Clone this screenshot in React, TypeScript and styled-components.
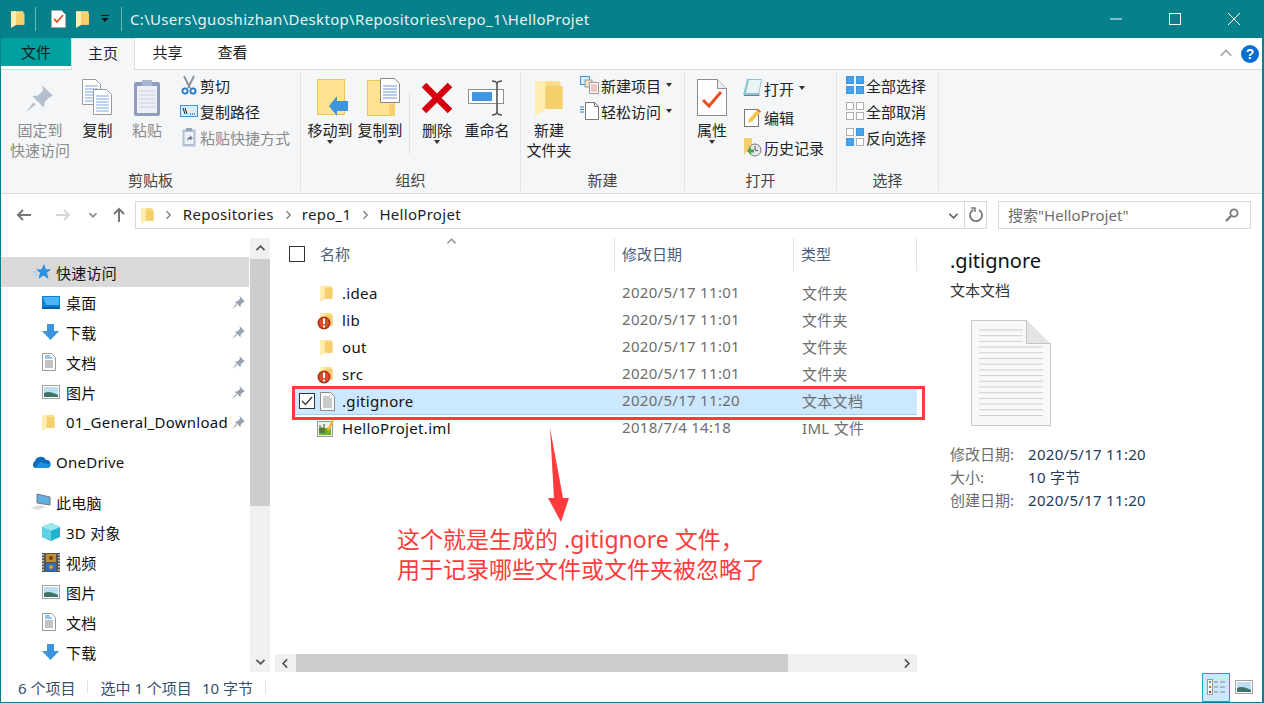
import * as React from "react";
import styled, { createGlobalStyle } from "styled-components";

const FONT = `"Noto Sans", "Noto Sans CJK SC", sans-serif`;

const Global = createGlobalStyle`
  html, body { margin: 0; padding: 0; height: 100%; overflow: hidden; background: #fff; }
  body { font-family: ${FONT}; font-size: 15px; color: #1a1a1a; }
  svg { display: block; flex: none; }
`;

/* ---------- icons ---------- */
const Folder = ({ size = 17 }: { size?: number }) => (
  <svg width={size * 0.75} height={size} viewBox="2 0 12 16">
    <path d="M3 1h10v12H6.500L3 15z" fill="#f9dc8a" />
    <path d="M2 1h4.500v12L2 16z" fill="#ffeeb0" />
    <path d="M6.500 3H14v10H6.500z" fill="#f5cf6b" />
  </svg>
);
const Pin = ({ color = "#9aa3ad", size = 15 }: { color?: string; size?: number }) => (
  <svg width={size} height={size} viewBox="0 0 14 14">
    <path d="M8 1l5 5-1.500.6-2.300 2.300-.4 2.600-5.300-5.300 2.600-.4 2.300-2.300z" fill={color} />
    <path d="M1 13l3.500-4.500 1 1z" fill={color} />
  </svg>
);
const Caret = styled.i`
  display: block;
  width: 0;
  height: 0;
  border: 3.5px solid transparent;
  border-top: 4px solid #333;
  border-bottom: 0;
`;
const Doc = () => (
  <svg width="30" height="37" viewBox="0 0 30 37">
    <path d="M.5.500h20l9 9v27H.500z" fill="#fff" stroke="#8b8b8b" />
    <path d="M20.500.500v9h9" fill="#eee" stroke="#8b8b8b" />
    <path d="M6 21l6 6 12-14" fill="none" stroke="#e8501f" strokeWidth="3" />
  </svg>
);
const TitleNote = () => (
  <svg width="15" height="18" viewBox="0 0 15 18">
    <path d="M.5.500h10l4 4v13H.500z" fill="#fff" stroke="#aaa" />
    <path d="M3 9l3 3 6-7" fill="none" stroke="#e8501f" strokeWidth="1.800" />
  </svg>
);
const PinLarge = () => (
  <svg width="30" height="30" viewBox="0 0 14 14">
    <path d="M8 1l5 5-1.500.6-2.300 2.300-.4 2.600-5.300-5.300 2.600-.4 2.300-2.300z" fill="#b4bfce" />
    <path d="M.5 13.500l3.500-4.500 1 1z" fill="#b4bfce" />
  </svg>
);
const Paper = ({ x, y }: { x: number; y: number }) => (
  <g transform={`translate(${x} ${y})`}>
    <path d="M.5.500h13l5 5v20H.500z" fill="#fff" stroke="#999" />
    <path d="M3 7h13M3 10h13M3 13h13M3 16h13M3 19h13M3 22h13" stroke="#7aa7e0" />
  </g>
);
const CopyIcon = () => (
  <svg width="31" height="37" viewBox="0 0 31 37">
    <Paper x={0} y={0} />
    <Paper x={11} y={10} />
  </svg>
);
const PasteIcon = () => (
  <svg width="28" height="38" viewBox="0 0 28 38">
    <rect x="1" y="3" width="26" height="34" rx="2" fill="#8e9dbb" />
    <rect x="4" y="7" width="20" height="27" fill="#eceff5" />
    <path d="M6 12h16M6 16h16M6 20h16M6 24h16M6 28h16" stroke="#c7cfde" />
    <rect x="9" y="1" width="10" height="6" rx="1" fill="#a9b5cb" />
  </svg>
);
const Scissors = () => (
  <svg width="16" height="20" viewBox="0 0 16 20">
    <path d="M3 1l6 12M13 1L7 13" stroke="#8a8f99" strokeWidth="1.800" fill="none" />
    <circle cx="4" cy="16" r="2.600" fill="none" stroke="#1f79c5" strokeWidth="1.800" />
    <circle cx="12" cy="16" r="2.600" fill="none" stroke="#1f79c5" strokeWidth="1.800" />
  </svg>
);
const PathIcon = () => (
  <svg width="18" height="12" viewBox="0 0 18 12">
    <rect x=".5" y=".5" width="17" height="11" fill="#d8ecfb" stroke="#3d94d6" />
    <path d="M3 3l2 6M5 3l2 6" stroke="#223" />
    <path d="M10 9h1M12 9h1M14 9h1" stroke="#223" />
  </svg>
);
const ShortcutIcon = () => (
  <svg width="14" height="20" viewBox="0 0 14 20">
    <rect x=".5" y="2.500" width="13" height="17" rx="1" fill="#b4bfd2" />
    <rect x="2.500" y="5" width="9" height="12" fill="#eef1f6" />
    <rect x="4" y="1" width="6" height="3" fill="#96a3ba" />
    <path d="M5 14c0-3 1.500-4 3-4V8.500L11 11 8 13.500V12c-1 0-2 .5-3 2z" fill="#6f7f99" />
  </svg>
);
const MoveTo = () => (
  <svg width="36" height="38" viewBox="-5 0 36 38">
    <rect x=".5" y=".5" width="27" height="35" fill="#ffe391" stroke="#e9c65c" />
    <path d="M12 27l8-10v5h11v10H20v5z" fill="#3d94de" />
  </svg>
);
const CopyTo = () => (
  <svg width="40" height="40" viewBox="-7 -2 40 40">
    <path d="M.5.500h27v35H.500z" fill="#ffe391" stroke="#e9c65c" />
    <path d="M22 24h6v12h-6z" fill="#f7cf6b" />
    <path d="M13.500-1.500h14l5 5v19h-19z" fill="#fff" stroke="#888" />
    <path d="M16 6h14M16 9h14M16 12h14M16 15h14M16 18h14" stroke="#6f98d8" />
  </svg>
);
const DeleteIcon = () => (
  <svg width="32" height="32" viewBox="0 0 32 32">
    <path d="M3 3l26 26M29 3L3 29" stroke="#d5000f" strokeWidth="6.500" />
  </svg>
);
const RenameIcon = () => (
  <svg width="38" height="36" viewBox="0 0 38 36">
    <rect x=".5" y="9.500" width="35" height="14" fill="#fff" stroke="#8f8f8f" />
    <rect x="4" y="12" width="20" height="9" fill="#3f97e3" />
    <path d="M24 1c3 0 4.500 1 5 2.500C29.500 2 31 1 34 1M29 3v30M24 35c3 0 4.500-1 5-2.500.5 1.500 2 2.500 5 2.500" fill="none" stroke="#555" strokeWidth="1.600" />
  </svg>
);
const NewItem = () => (
  <svg width="20" height="18" viewBox="0 0 20 18">
    <rect x=".5" y=".5" width="9" height="8" fill="#d8ecfb" stroke="#3d94d6" />
    <rect x="5" y="4" width="7" height="7" fill="#f1e3c2" stroke="#999" />
    <path d="M9.500 6.500h9v11h-9z" fill="#fff" stroke="#999" />
    <path d="M11 9h6M11 11h6M11 13h6M11 15h6" stroke="#e08a8a" />
  </svg>
);
const EasyAccess = () => (
  <svg width="20" height="18" viewBox="0 0 20 18">
    <path d="M5.500.500h9l4 4v13h-13z" fill="#fff" stroke="#777" />
    <path d="M14.500.500v4h4" fill="none" stroke="#777" />
    <path d="M0 5h4M0 7.500h4M0 10h4" stroke="#2a7fd1" />
  </svg>
);
const OpenIcon = () => (
  <svg width="20" height="20" viewBox="0 0 20 20">
    <path d="M4 1h15l-3 16H0z" fill="#8fc0cf" />
    <path d="M6 2h12l-2.500 13H3z" fill="#e8f3f4" />
    <path d="M1 17h14l2-1-1 2H1z" fill="#657f8c" />
  </svg>
);
const EditIcon = () => (
  <svg width="18" height="20" viewBox="0 0 18 20">
    <rect x=".5" y="1.500" width="14" height="17" fill="#fff" stroke="#777" />
    <path d="M4 15l1-4L14 1l3 2.500-9 10z" fill="#f6c64c" />
    <path d="M14 1l3 2.500-1 1.200-3-2.500z" fill="#e9603a" />
  </svg>
);
const HistoryIcon = () => (
  <svg width="20" height="20" viewBox="0 0 20 20">
    <path d="M1 1h8v14H3l-2 3z" fill="#f5cf6b" />
    <circle cx="12" cy="13" r="6" fill="#e4e8ea" stroke="#777" />
    <path d="M12 9v4l3 1" fill="none" stroke="#555" />
    <path d="M4 14l4-4v2.500h3v3H8V18z" fill="#44a544" />
  </svg>
);
const Grid = ({ fills }: { fills: string[] }) => (
  <svg width="18" height="18" viewBox="0 0 18 18">
    {[
      [0, 0],
      [10, 0],
      [0, 10],
      [10, 10],
    ].map(([x, y], i) => (
      <rect
        key={i}
        x={x + 0.5}
        y={y + 0.5}
        width="7"
        height="7"
        fill={fills[i]}
        stroke={fills[i] === "#fff" ? "#b0b0b0" : "#3d97e0"}
      />
    ))}
  </svg>
);
const Arrow = ({ d, color, size = 16 }: { d: string; color: string; size?: number }) => (
  <svg width={size} height={size} viewBox="0 0 16 16">
    <path d={d} fill="none" stroke={color} strokeWidth="2" />
  </svg>
);
const Warn = () => (
  <svg width="14" height="14" viewBox="0 0 14 14">
    <circle cx="7" cy="7" r="6.500" fill="#a93015" />
    <circle cx="7" cy="7" r="5" fill="#d9502c" />
    <path d="M6 2.500h2V8H6zM6 9.500h2v2H6z" fill="#fff" />
  </svg>
);
const SmallDoc = () => (
  <svg width="15" height="19" viewBox="0 0 15 19">
    <path d="M.5.500h10l4 4v14H.500z" fill="#fafafa" stroke="#8c8c8c" />
    <path d="M3 5h7M3 7h9M3 9h9M3 11h9M3 13h9M3 15h9" stroke="#9a9a9a" />
  </svg>
);
const ImlIcon = () => (
  <svg width="18" height="18" viewBox="0 0 18 18">
    <rect x=".5" y="2.500" width="15" height="15" fill="#eef3e0" stroke="#999" />
    <rect x="2" y="9" width="12" height="7" fill="#6eb32e" />
    <path d="M3 14V6M5 14V8M7 14V5" stroke="#444" />
    <path d="M10 11L15 1l2 1-5 10z" fill="#f2b632" />
  </svg>
);
const Desktop = () => (
  <svg width="18" height="13" viewBox="0 0 18 13">
    <rect width="18" height="13" fill="#0a7fd4" />
    <path d="M1 1h16v8H4z" fill="#4db5f5" />
    <rect y="11" width="18" height="2" fill="#075fa6" />
  </svg>
);
const Download = () => (
  <svg width="17" height="16" viewBox="0 0 17 16">
    <path d="M5 0h7v7h5l-8.500 9L0 7h5z" fill="#3d94de" />
  </svg>
);
const DocsIcon = () => (
  <svg width="14" height="18" viewBox="0 0 14 18">
    <path d="M.5.500h9l4 4v13H.500z" fill="#fff" stroke="#999" />
    <path d="M3 3h5M3 5h7" stroke="#2a8bdc" />
    <path d="M3 8h8M3 10h8M3 12h8M3 14h8" stroke="#888" />
  </svg>
);
const Pictures = () => (
  <svg width="18" height="14" viewBox="0 0 18 14">
    <rect x=".5" y=".5" width="17" height="13" fill="#fff" stroke="#a3a3a3" />
    <rect x="2" y="2" width="14" height="10" fill="#bcdff5" />
    <path d="M2 8c4-2 8-1 14 2v2H2z" fill="#3f7568" />
  </svg>
);
const StarIcon = () => (
  <svg width="18" height="16" viewBox="0 0 18 16">
    <path d="M11 0l2 5.300h5l-4 3.400 1.500 6.300-5-3.600L5.500 15 7 8.700 3 5.300h5.500z" fill="#2d8fe0" />
    <path d="M0 8h4M1 11h3M3 5h3" stroke="#8cc4f0" />
  </svg>
);
const Cloud = () => (
  <svg width="20" height="14" viewBox="0 0 20 14">
    <path d="M4 13a4 4 0 0 1 0-7 6 6 0 0 1 11-1 4 4 0 0 1 1 8z" fill="#0f6cbd" />
    <path d="M4 13h12a3.500 3.500 0 0 0 3.500-3.500L9 7z" fill="#1b8fe0" />
  </svg>
);
const PcIcon = () => (
  <svg width="20" height="18" viewBox="0 0 20 18">
    <path d="M6 1l13 3v8L6 10z" fill="#5eb0e5" stroke="#777" />
    <path d="M0 15l9-3 6 2-8 3z" fill="#d9dde0" />
  </svg>
);
const Cube = () => (
  <svg width="18" height="18" viewBox="0 0 18 18">
    <path d="M9 0l9 4v10l-9 4-9-4V4z" fill="#1fb5cf" />
    <path d="M9 0l9 4-9 4-9-4z" fill="#9fe8f0" />
    <path d="M0 4l9 4v10l-9-4z" fill="#5ed3e3" />
  </svg>
);
const Film = () => (
  <svg width="18" height="19" viewBox="0 0 18 19">
    <rect width="18" height="19" fill="#555" />
    <path d="M1 1v17M17 1v17" stroke="#ddd" strokeDasharray="1.500 1.500" strokeWidth="1.500" />
    <rect x="4" y="1" width="10" height="8" fill="#c48d2a" />
    <rect x="4" y="10" width="10" height="8" fill="#2a6fc4" />
    <circle cx="9" cy="5" r="2" fill="#7a3a1a" />
    <circle cx="9" cy="14" r="2" fill="#d8a020" />
  </svg>
);
const BigDoc = () => (
  <svg width="80" height="106" viewBox="0 0 80 106">
    <path d="M.5.500h55l24 24v81H.500z" fill="#f7f8f8" stroke="#c8c8c8" />
    <path d="M55.500.500v23h24" fill="#e4e4e4" stroke="#c4c4c4" />
    {Array.from({ length: 16 }, (_, i) => (
      <path key={i} d={`M8 ${10 + i * 5.700}h${i < 3 ? 44 : 64}`} stroke="#cfcfcf" />
    ))}
  </svg>
);
const ViewList = () => (
  <svg width="18" height="16" viewBox="0 0 18 16">
    <rect x=".5" y=".5" width="5" height="15" fill="#fff" stroke="#999" />
    <rect x="2" y="2" width="2" height="2" fill="#39c" />
    <rect x="2" y="7" width="2" height="2" fill="#b70" />
    <rect x="2" y="12" width="2" height="2" fill="#c22" />
    <path d="M7 3h4M13 3h5M7 8h4M13 8h5M7 13h4M13 13h5" stroke="#888" />
  </svg>
);

/* ---------- window shell ---------- */
const Win = styled.div`
  width: 1264px;
  height: 703px;
  box-sizing: border-box;
  border: 1px solid #06808a;
  border-top: 0;
  border-right-width: 2px;
  display: flex;
  flex-direction: column;
  position: relative;
  background: #fff;
  overflow: hidden;
`;
const TitleBar = styled.div`
  height: 38px;
  margin: 0 -2px 0 -1px;
  padding: 0 1px 0 11px;
  background: #06808a;
  display: flex;
  align-items: center;
  flex: none;
  color: #fff;
`;
const TitleSep = styled.span<{ $m: string }>`
  width: 1px;
  height: 24px;
  background: #6fb3b9;
  margin: ${(p) => p.$m};
`;
const TitleGap = styled.span<{ $w: number }>`
  width: ${(p) => p.$w}px;
`;
const TitleText = styled.span`
  font-size: 15px;
  letter-spacing: 0.32px;
  color: #e6f3f4;
  flex: 1;
  white-space: nowrap;
`;
const WinBtn = styled.span`
  width: 59px;
  display: flex;
  justify-content: center;
`;
const TabBar = styled.div`
  height: 32px;
  flex: none;
  display: flex;
  align-items: flex-start;
  border-bottom: 1px solid #dadbdc;
  box-sizing: border-box;
  position: relative;
`;
const Tab = styled.div<{ $w: number; $kind?: string }>`
  width: ${(p) => p.$w}px;
  box-sizing: border-box;
  text-align: center;
  font-size: 15px;
  line-height: 28px;
  height: ${(p) => (p.$kind === "file" ? 28 : p.$kind === "on" ? 32 : 31)}px;
  background: ${(p) => (p.$kind === "file" ? "#00a0a0" : p.$kind === "on" ? "#f5f6f7" : "#fff")};
  color: ${(p) => (p.$kind === "file" ? "#06201f" : "#222")};
  border: ${(p) => (p.$kind === "on" ? "1px solid #dadbdc" : "0")};
  border-bottom: 0;
`;
const TabEnd = styled.div`
  margin-left: auto;
  display: flex;
  align-items: center;
  gap: 8px;
  height: 31px;
  padding-right: 3px;
`;
const Help = styled.span`
  width: 18px;
  height: 18px;
  border-radius: 50%;
  background: #0a6fd0;
  color: #fff;
  font: bold 14px/18px "Liberation Sans", sans-serif;
  text-align: center;
`;

/* ---------- ribbon ---------- */
const Ribbon = styled.div`
  height: 124px;
  flex: none;
  box-sizing: border-box;
  background: #f5f6f7;
  border-bottom: 1px solid #dadbdc;
  display: flex;
  align-items: stretch;
`;
const Group = styled.div<{ $w: number }>`
  width: ${(p) => p.$w}px;
  flex: none;
  box-sizing: border-box;
  margin: 2px 0;
  border-right: 1px solid #e1e3e6;
  display: flex;
  flex-direction: column;
`;
const GroupBody = styled.div<{ $pl?: number }>`
  flex: 1;
  display: flex;
  padding-left: ${(p) => p.$pl ?? 0}px;
`;
const GroupLabel = styled.div`
  text-align: center;
  font-size: 15px;
  line-height: 20px;
  height: 21px;
  color: #444;
`;
const LargeBtn = styled.div<{ $w: number; $off?: boolean }>`
  width: ${(p) => p.$w}px;
  flex: none;
  display: flex;
  flex-direction: column;
  align-items: center;
  color: ${(p) => (p.$off ? "#8a8a8a" : "#222")};
  line-height: 20px;
  text-align: center;
  font-size: 15px;
  white-space: nowrap;
`;
const LargeIcon = styled.div`
  height: 48px;
  padding-top: 3px;
  box-sizing: border-box;
  display: flex;
  align-items: center;
`;
const SmallCol = styled.div<{ $gap?: number; $top?: number; $left?: number }>`
  display: flex;
  flex-direction: column;
  gap: ${(p) => p.$gap ?? 6}px;
  padding-top: ${(p) => p.$top ?? 3}px;
  padding-left: ${(p) => p.$left ?? 0}px;
`;
const SmallBtn = styled.div<{ $off?: boolean }>`
  height: 20px;
  display: flex;
  align-items: center;
  white-space: nowrap;
  font-size: 15px;
  color: ${(p) => (p.$off ? "#8a8a8a" : "#222")};
`;
const SmallIcon = styled.span`
  width: 21px;
  display: flex;
  justify-content: center;
  margin-right: 1px;
`;
const CaretRight = styled(Caret)`
  margin-left: 5px;
`;
const VSep = styled.span`
  width: 1px;
  height: 62px;
  margin: 20px 0 0 4px;
  background: #e1e3e6;
`;

/* ---------- navigation ---------- */
const Nav = styled.div`
  height: 42px;
  flex: none;
  display: flex;
  align-items: flex-start;
  padding-top: 7px;
  box-sizing: border-box;
`;
const NavBtn = styled.span<{ $w: number }>`
  width: ${(p) => p.$w}px;
  height: 28px;
  display: flex;
  align-items: center;
  justify-content: center;
`;
const AddrBox = styled.div`
  width: 852px;
  height: 28px;
  margin-left: 4px;
  box-sizing: border-box;
  border: 1px solid #d9d9d9;
  display: flex;
  align-items: center;
  padding-left: 5px;
`;
const Crumb = styled.span`
  font-size: 15px;
  color: #222;
  letter-spacing: 0.3px;
  padding-bottom: 3px;
`;
const CrumbChev = styled.span<{ $w: number }>`
  width: ${(p) => p.$w}px;
  display: flex;
  justify-content: center;
`;
const AddrEnd = styled.div`
  margin-left: auto;
  display: flex;
  align-items: center;
  height: 100%;
`;
const Refresh = styled.span`
  width: 21px;
  height: 100%;
  border-left: 1px solid #d9d9d9;
  margin-left: 4px;
  display: flex;
  align-items: center;
  justify-content: center;
`;
const SearchBox = styled.div`
  width: 253px;
  height: 28px;
  margin-left: 11px;
  box-sizing: border-box;
  border: 1px solid #d9d9d9;
  display: flex;
  align-items: center;
  justify-content: space-between;
  padding: 0 11px 1px 9px;
  color: #6d6d6d;
  font-size: 15px;
`;

/* ---------- body ---------- */
const Body = styled.div`
  flex: 1;
  min-height: 0;
  display: flex;
`;
const Sidebar = styled.div`
  width: 248px;
  flex: none;
  padding-top: 21px;
  box-sizing: border-box;
  overflow: hidden;
`;
const TreeRow = styled.div<{ $level: number; $on?: boolean; $gapTop?: number }>`
  height: 30px;
  margin-top: ${(p) => p.$gapTop ?? 0}px;
  display: flex;
  align-items: center;
  padding-left: ${(p) => (p.$level === 0 ? 30 : 41)}px;
  padding-right: 3px;
  background: ${(p) => (p.$on ? "#d9d9d9" : "transparent")};
  color: #111;
  font-size: 15px;
  letter-spacing: 0.25px;
  white-space: nowrap;
`;
const TreeIcon = styled.span<{ $level: number; $nudge?: number }>`
  width: ${(p) => (p.$level === 0 ? 25 : 24)}px;
  padding-left: ${(p) => p.$nudge ?? 0}px;
  box-sizing: border-box;
  display: flex;
  align-items: center;
`;
const TreeLabel = styled.span`
  flex: 1;
  overflow: hidden;
`;
const VScroll = styled.div`
  width: 20px;
  flex: none;
  margin-left: 1px;
  margin-top: 2px;
  background: #f0f0f0;
  display: flex;
  flex-direction: column;
`;
const ScrollBtn = styled.span`
  height: 21px;
  flex: none;
  display: flex;
  align-items: center;
  justify-content: center;
`;
const VThumb = styled.span`
  height: 247px;
  flex: none;
  background: #cdcdcd;
`;
const Filler = styled.span`
  flex: 1;
`;
const ListPane = styled.div`
  width: 642px;
  flex: none;
  margin-left: 5px;
  display: flex;
  flex-direction: column;
  position: relative;
`;
const ListHead = styled.div`
  height: 37px;
  flex: none;
  display: grid;
  grid-template-columns: 340px 179px 123px;
  align-items: stretch;
  font-size: 15px;
  color: #4c607a;
`;
const HeadCell = styled.div<{ $first?: boolean }>`
  display: flex;
  align-items: center;
  padding-left: ${(p) => (p.$first ? 14 : 7)}px;
  padding-bottom: 2px;
  gap: 15px;
  border-right: 1px solid #e5e5e5;
  margin: 2px 0;
  position: relative;
`;
const Check = styled.span`
  width: 16px;
  height: 16px;
  box-sizing: border-box;
  border: 1px solid #333;
  flex: none;
  display: flex;
  align-items: center;
  justify-content: center;
  background: #fff;
`;
const SortMark = styled.span`
  position: absolute;
  left: 170px;
  top: -2px;
`;
const Rows = styled.div`
  flex: 1;
  padding-top: 7px;
`;
const FileRow = styled.div<{ $on?: boolean }>`
  height: 27px;
  box-sizing: border-box;
  margin-left: 19px;
  display: grid;
  grid-template-columns: 328px 180px 115px;
  align-items: center;
  background: ${(p) => (p.$on ? "#cce8ff" : "transparent")};
  border-bottom: 1px solid ${(p) => (p.$on ? "#99d1ff" : "transparent")};
  font-size: 15px;
`;
const NameCell = styled.div`
  display: flex;
  align-items: center;
  color: #111;
  letter-spacing: 0.33px;
`;
const CheckSlot = styled.span`
  width: 21px;
  margin-left: 5px;
  display: flex;
`;
const IconSlot = styled.span`
  width: 22px;
  height: 20px;
  display: flex;
  align-items: center;
  position: relative;
`;
const WarnBadge = styled.span`
  position: absolute;
  left: -3px;
  top: 6px;
`;
const ImlSlot = styled.span`
  margin-left: -3px;
`;
const Dim = styled.div`
  color: #6d6d6d;
  font-size: 15px;
  letter-spacing: 0.3px;
  margin-bottom: 2px;
`;
const HScroll = styled.div`
  height: 18px;
  flex: none;
  background: #f0f0f0;
  display: flex;
`;
const HBtn = styled.span`
  width: 21px;
  flex: none;
  display: flex;
  align-items: center;
  justify-content: center;
`;
const HThumb = styled.span`
  width: 492px;
  background: #cdcdcd;
`;
const Detail = styled.div`
  flex: 1;
  padding: 11px 0 0 33px;
  color: #222;
`;
const DetailName = styled.div`
  font-size: 20px;
  line-height: 28px;
  color: #111;
`;
const DetailType = styled.div`
  font-size: 15px;
  line-height: 24px;
  margin-top: 3px;
  color: #333;
`;
const DetailIcon = styled.div`
  margin: 18px 0 0 21px;
  height: 116px;
`;
const Meta = styled.div`
  margin-top: 6px;
  display: grid;
  grid-template-columns: 78px auto;
  grid-auto-rows: 23px;
  align-items: center;
  font-size: 15px;
`;
const MetaKey = styled.span`
  color: #6d6d6d;
`;
const MetaVal = styled.span`
  color: #1f3b57;
  letter-spacing: 0.3px;
`;

/* ---------- status ---------- */
const Status = styled.div`
  height: 30px;
  flex: none;
  display: flex;
  align-items: center;
  font-size: 15px;
  color: #35506b;
  padding-left: 17px;
  white-space: pre;
`;
const StatusSep = styled.span`
  width: 1px;
  height: 14px;
  background: #e3e3e3;
  margin: 0 12px;
`;
const StatusSize = styled.span`
  margin-left: 10px;
`;
const ViewBtns = styled.div`
  margin-left: auto;
  margin-right: 9px;
  display: flex;
  align-items: center;
  gap: 5px;
  height: 100%;
`;
const ViewBtn = styled.span`
  width: 28px;
  height: 29px;
  box-sizing: border-box;
  background: #cce8ff;
  border: 1px solid #2a9dd5;
  display: flex;
  align-items: center;
  justify-content: center;
`;

/* ---------- annotation ---------- */
const RedBox = styled.div`
  position: absolute;
  left: 291px;
  top: 386px;
  width: 633px;
  height: 34px;
  box-sizing: border-box;
  border: 3px solid #ff3b3b;
`;
const RedArrow = styled.svg`
  position: absolute;
  left: 540px;
  top: 425px;
`;
const Note = styled.div`
  position: absolute;
  left: 396px;
  top: 524px;
  font-size: 23px;
  line-height: 30px;
  color: #ff3b3b;
  white-space: nowrap;
`;

const treeTop = [
  { label: "桌面", icon: <Desktop /> },
  { label: "下载", icon: <Download /> },
  { label: "文档", icon: <DocsIcon /> },
  { label: "图片", icon: <Pictures /> },
  { label: "01_General_Download", icon: <Folder /> },
];
const treePc = [
  { label: "3D 对象", icon: <Cube /> },
  { label: "视频", icon: <Film /> },
  { label: "图片", icon: <Pictures /> },
  { label: "文档", icon: <DocsIcon /> },
  { label: "下载", icon: <Download /> },
];
const files = [
  { name: ".idea", date: "2020/5/17 11:01", type: "文件夹", kind: "folder" },
  { name: "lib", date: "2020/5/17 11:01", type: "文件夹", kind: "warn" },
  { name: "out", date: "2020/5/17 11:01", type: "文件夹", kind: "folder" },
  { name: "src", date: "2020/5/17 11:01", type: "文件夹", kind: "warn" },
  { name: ".gitignore", date: "2020/5/17 11:20", type: "文本文档", kind: "doc" },
  { name: "HelloProjet.iml", date: "2018/7/4 14:18", type: "IML 文件", kind: "iml" },
];

const chevR = "M6 3l5 5-5 5";
const chevD = "M3 6l5 5 5-5";

const App = () => {
  return (
    <Win>
      <Global />
      <TitleBar>
        <Folder size={18} />
        <TitleSep $m="0 15px 0 10px" />
        <TitleNote />
        <TitleGap $w={10} />
        <Folder size={18} />
        <TitleGap $w={11} />
        <svg width="10" height="8" viewBox="0 0 10 8">
          <path d="M1 .5h8" stroke="#111" />
          <path d="M1.500 3h7L5 7z" fill="#111" />
        </svg>
        <TitleSep $m="0 8px 0 11px" />
        <TitleText>C:\Users\guoshizhan\Desktop\Repositories\repo_1\HelloProjet</TitleText>
        <WinBtn>
          <svg width="12" height="2" viewBox="0 0 12 2">
            <path d="M0 1h12" stroke="#fff" />
          </svg>
        </WinBtn>
        <WinBtn>
          <svg width="12" height="12" viewBox="0 0 12 12">
            <rect x=".5" y=".5" width="11" height="11" fill="none" stroke="#fff" />
          </svg>
        </WinBtn>
        <WinBtn>
          <svg width="12" height="12" viewBox="0 0 12 12">
            <path d="M0 0l12 12M12 0L0 12" stroke="#fff" />
          </svg>
        </WinBtn>
      </TitleBar>

      <TabBar>
        <Tab $w={70} $kind="file">文件</Tab>
        <Tab $w={64} $kind="on">主页</Tab>
        <Tab $w={65}>共享</Tab>
        <Tab $w={65}>查看</Tab>
        <TabEnd>
          <Arrow d="M2 10l6-6 6 6" color="#a5a5a5" size={14} />
          <Help>?</Help>
        </TabEnd>
      </TabBar>

      <Ribbon>
        <Group $w={300}>
          <GroupBody $pl={9}>
            <LargeBtn $w={60} $off>
              <LargeIcon><PinLarge /></LargeIcon>
              固定到<br />快速访问
            </LargeBtn>
            <LargeBtn $w={55}>
              <LargeIcon><CopyIcon /></LargeIcon>
              复制
            </LargeBtn>
            <LargeBtn $w={44} $off>
              <LargeIcon><PasteIcon /></LargeIcon>
              粘贴
            </LargeBtn>
            <SmallCol $left={9}>
              <SmallBtn><SmallIcon><Scissors /></SmallIcon>剪切</SmallBtn>
              <SmallBtn><SmallIcon><PathIcon /></SmallIcon>复制路径</SmallBtn>
              <SmallBtn $off><SmallIcon><ShortcutIcon /></SmallIcon>粘贴快捷方式</SmallBtn>
            </SmallCol>
          </GroupBody>
          <GroupLabel>剪贴板</GroupLabel>
        </Group>
        <Group $w={220}>
          <GroupBody $pl={4}>
            <LargeBtn $w={50}>
              <LargeIcon><MoveTo /></LargeIcon>
              移动到
              <Caret />
            </LargeBtn>
            <LargeBtn $w={50}>
              <LargeIcon><CopyTo /></LargeIcon>
              复制到
              <Caret />
            </LargeBtn>
            <VSep />
            <LargeBtn $w={54}>
              <LargeIcon><DeleteIcon /></LargeIcon>
              删除
              <Caret />
            </LargeBtn>
            <LargeBtn $w={46}>
              <LargeIcon><RenameIcon /></LargeIcon>
              重命名
            </LargeBtn>
          </GroupBody>
          <GroupLabel>组织</GroupLabel>
        </Group>
        <Group $w={164}>
          <GroupBody $pl={4}>
            <LargeBtn $w={48}>
              <LargeIcon><Folder size={37} /></LargeIcon>
              新建<br />文件夹
            </LargeBtn>
            <SmallCol $left={6}>
              <SmallBtn><SmallIcon><NewItem /></SmallIcon>新建项目<CaretRight /></SmallBtn>
              <SmallBtn><SmallIcon><EasyAccess /></SmallIcon>轻松访问<CaretRight /></SmallBtn>
            </SmallCol>
          </GroupBody>
          <GroupLabel>新建</GroupLabel>
        </Group>
        <Group $w={152}>
          <GroupBody $pl={4}>
            <LargeBtn $w={46}>
              <LargeIcon><Doc /></LargeIcon>
              属性
              <Caret />
            </LargeBtn>
            <SmallCol $gap={9.5} $top={6} $left={7}>
              <SmallBtn><SmallIcon><OpenIcon /></SmallIcon>打开<CaretRight /></SmallBtn>
              <SmallBtn><SmallIcon><EditIcon /></SmallIcon>编辑</SmallBtn>
              <SmallBtn><SmallIcon><HistoryIcon /></SmallIcon>历史记录</SmallBtn>
            </SmallCol>
          </GroupBody>
          <GroupLabel>打开</GroupLabel>
        </Group>
        <Group $w={102}>
          <GroupBody $pl={7}>
            <SmallCol>
              <SmallBtn><SmallIcon><Grid fills={["#4aa3e8", "#4aa3e8", "#4aa3e8", "#4aa3e8"]} /></SmallIcon>全部选择</SmallBtn>
              <SmallBtn><SmallIcon><Grid fills={["#fff", "#fff", "#fff", "#fff"]} /></SmallIcon>全部取消</SmallBtn>
              <SmallBtn><SmallIcon><Grid fills={["#fff", "#4aa3e8", "#4aa3e8", "#fff"]} /></SmallIcon>反向选择</SmallBtn>
            </SmallCol>
          </GroupBody>
          <GroupLabel>选择</GroupLabel>
        </Group>
      </Ribbon>

      <Nav>
        <NavBtn $w={46}>
          <Arrow d="M15 8H2M7 3L2 8l5 5" color="#777" />
        </NavBtn>
        <NavBtn $w={32}>
          <Arrow d="M1 8h13M9 3l5 5-5 5" color="#d6d6d6" />
        </NavBtn>
        <NavBtn $w={28}>
          <Arrow d="M4 6l4 4 4-4" color="#888" size={14} />
        </NavBtn>
        <NavBtn $w={24}>
          <Arrow d="M8 15V2M3 7l5-5 5 5" color="#777" />
        </NavBtn>
        <AddrBox>
          <Folder />
          <CrumbChev $w={29}><Arrow d={chevR} color="#888" size={12} /></CrumbChev>
          <Crumb>Repositories</Crumb>
          <CrumbChev $w={28}><Arrow d={chevR} color="#888" size={12} /></CrumbChev>
          <Crumb>repo_1</Crumb>
          <CrumbChev $w={28}><Arrow d={chevR} color="#888" size={12} /></CrumbChev>
          <Crumb>HelloProjet</Crumb>
          <AddrEnd>
            <Arrow d={chevD} color="#666" size={13} />
            <Refresh>
              <svg width="16" height="16" viewBox="0 0 16 16">
                <path d="M5.500 2.800A6 6 0 1 0 11 3" fill="none" stroke="#777" strokeWidth="1.800" />
                <path d="M3 1h4v4" fill="none" stroke="#777" strokeWidth="1.500" />
              </svg>
            </Refresh>
          </AddrEnd>
        </AddrBox>
        <SearchBox>
          搜索"HelloProjet"
          <svg width="14" height="14" viewBox="0 0 14 14">
            <circle cx="9" cy="5" r="3.600" fill="none" stroke="#777" strokeWidth="1.800" />
            <path d="M6 8l-5 5" stroke="#777" strokeWidth="2.200" />
          </svg>
        </SearchBox>
      </Nav>

      <Body>
        <Sidebar>
          <TreeRow $level={0} $on>
            <TreeIcon $level={0} $nudge={2}><StarIcon /></TreeIcon>
            <TreeLabel>快速访问</TreeLabel>
          </TreeRow>
          {treeTop.map((r) => (
            <TreeRow $level={1} key={r.label}>
              <TreeIcon $level={1}>{r.icon}</TreeIcon>
              <TreeLabel>{r.label}</TreeLabel>
              <Pin />
            </TreeRow>
          ))}
          <TreeRow $level={0} $gapTop={10}>
            <TreeIcon $level={0}><Cloud /></TreeIcon>
            <TreeLabel>OneDrive</TreeLabel>
          </TreeRow>
          <TreeRow $level={0} $gapTop={10}>
            <TreeIcon $level={0}><PcIcon /></TreeIcon>
            <TreeLabel>此电脑</TreeLabel>
          </TreeRow>
          {treePc.map((r) => (
            <TreeRow $level={1} key={r.label + "pc"}>
              <TreeIcon $level={1}>{r.icon}</TreeIcon>
              <TreeLabel>{r.label}</TreeLabel>
            </TreeRow>
          ))}
        </Sidebar>
        <VScroll>
          <ScrollBtn><Arrow d="M3 10l5-5 5 5" color="#505050" size={13} /></ScrollBtn>
          <VThumb />
          <Filler />
          <ScrollBtn><Arrow d="M3 6l5 5 5-5" color="#505050" size={13} /></ScrollBtn>
        </VScroll>
        <ListPane>
          <ListHead>
            <HeadCell $first>
              <Check />
              名称
              <SortMark><Arrow d="M3 9l5-5 5 5" color="#9a9a9a" size={13} /></SortMark>
            </HeadCell>
            <HeadCell>修改日期</HeadCell>
            <HeadCell>类型</HeadCell>
          </ListHead>
          <Rows>
            {files.map((f) => (
              <FileRow key={f.name} $on={f.kind === "doc"}>
                <NameCell>
                  <CheckSlot>
                    {f.kind === "doc" && (
                      <Check>
                        <svg width="12" height="10" viewBox="0 0 12 10">
                          <path d="M1 5l3.500 3.500L11 1" fill="none" stroke="#333" strokeWidth="1.300" />
                        </svg>
                      </Check>
                    )}
                  </CheckSlot>
                  <IconSlot>
                    {f.kind === "doc" ? (
                      <SmallDoc />
                    ) : f.kind === "iml" ? (
                      <ImlSlot><ImlIcon /></ImlSlot>
                    ) : (
                      <Folder />
                    )}
                    {f.kind === "warn" && (
                      <WarnBadge><Warn /></WarnBadge>
                    )}
                  </IconSlot>
                  {f.name}
                </NameCell>
                <Dim>{f.date}</Dim>
                <Dim>{f.type}</Dim>
              </FileRow>
            ))}
          </Rows>
          <HScroll>
            <HBtn><Arrow d="M10 3L5 8l5 5" color="#505050" size={13} /></HBtn>
            <HThumb />
            <Filler />
            <HBtn><Arrow d="M6 3l5 5-5 5" color="#505050" size={13} /></HBtn>
          </HScroll>
        </ListPane>
        <Detail>
          <DetailName>.gitignore</DetailName>
          <DetailType>文本文档</DetailType>
          <DetailIcon><BigDoc /></DetailIcon>
          <Meta>
            <MetaKey>修改日期:</MetaKey><MetaVal>2020/5/17 11:20</MetaVal>
            <MetaKey>大小:</MetaKey><MetaVal>10 字节</MetaVal>
            <MetaKey>创建日期:</MetaKey><MetaVal>2020/5/17 11:20</MetaVal>
          </Meta>
        </Detail>
      </Body>

      <Status>
        6 个项目
        <StatusSep />
        选中 1 个项目
        <StatusSize>10 字节</StatusSize>
        <StatusSep />
        <ViewBtns>
          <ViewBtn><ViewList /></ViewBtn>
          <Pictures />
        </ViewBtns>
      </Status>

      <RedBox />
      <RedArrow width="36" height="100" viewBox="0 0 36 100">
        <path d="M9 3l4 70h9z" fill="#ff3b3b" />
        <path d="M7 73h21l-8 24z" fill="#ff3b3b" />
      </RedArrow>
      <Note>
        这个就是生成的 .gitignore 文件，
        <br />
        用于记录哪些文件或文件夹被忽略了
      </Note>
    </Win>
  );
};

export default App;
